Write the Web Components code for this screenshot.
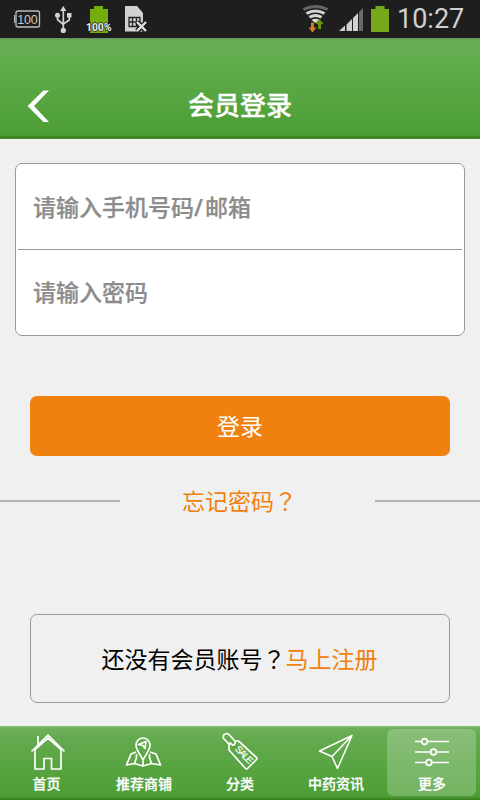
<!DOCTYPE html>
<html lang="zh-CN">
<head>
<meta charset="utf-8">
<title>会员登录</title>
<style>
html,body{margin:0;height:100%}
body{background:#f0f0f0;font-family:"Noto Sans CJK SC",sans-serif;overflow:hidden}
</style>
</head>
<body>
<login-app></login-app>
<script>
const define = (name, html) => customElements.define(name, class extends HTMLElement {
  constructor() {
    super();
    const t = document.createElement('template');
    t.innerHTML = html;
    this.attachShadow({mode: 'open'}).append(t.content.cloneNode(true));
  }
});

define('status-bar', `
<style>
:host{display:flex;height:38px;background:#1e1e1e;justify-content:space-between;align-items:flex-start;color:#d0d0d0}
svg{display:block;flex:none}
.right{display:flex}
.time{font:27px/38px Roboto,sans-serif;width:83px;white-space:nowrap}
</style>
<svg width="160" height="38" viewBox="0 0 160 38">
  <rect x="16" y="11" width="23.5" height="16" rx="2" fill="none" stroke="#bdbdbd" stroke-width="1.3"/>
  <path d="M14.5 15v8" stroke="#bdbdbd"/>
  <text x="17.3" y="24" font-family="Liberation Sans,sans-serif" font-size="12.5" fill="#c4c4c4" textLength="20.5">100</text>
  <g stroke="#cfcfcf" stroke-width="1.7" fill="none"><path d="M63.3 9v21M57.5 16v3.5l5.800 5M69.300 15v5l-6 4"/></g>
  <g fill="#d4d4d4"><path d="M63.300 6l3.200 5h-6.400zM67 13h4.500v4.500H67z"/><circle cx="57.500" cy="15.300" r="2.500"/><circle cx="63.300" cy="30.400" r="2.600"/></g>
  <path d="M94 6h9v3h5v24H90V9h4z" fill="#75ad0b"/>
  <text x="86" y="30.700" font-family="Roboto,sans-serif" font-weight="700" font-size="10.500" fill="#eee" stroke="#222" stroke-width="1.4" paint-order="stroke" textLength="25.500">100%</text>
  <path d="M125 6h12l6 7v18.500h-18z" fill="#d1d1d1"/>
  <path d="M129 17.500h11v9h-11zM132.500 17v10M136.500 17v10M129 22h11" fill="none" stroke="#262626" stroke-width="1.300"/>
  <path d="M137 22l9 9M146 22l-9 9" stroke="#1e1e1e" stroke-width="5"/>
  <path d="M137 22l9 9M146 22l-9 9" stroke="#e0e0e0" stroke-width="2.400"/>
</svg>
<div class="right">
<svg width="97" height="38" viewBox="300 0 97 38">
  <g fill="none" stroke-width="3"><path d="M303.500 9.500q12-6 24 0" stroke="#666"/><path d="M306.500 13.500q9-5 18 0M309.500 17.300q6-3.800 12 0" stroke="#d5d5d5"/></g>
  <path d="M311.500 20q4-2.500 8 0l-4 3z" fill="#ddd"/>
  <path d="M311 22.500h3v5h2.500l-4 5-4-5h2.500z" fill="#d97b24"/>
  <path d="M318 29h3v-5h2.500l-4-5-4 5h2.500z" fill="#66980f"/>
  <path d="M339 31l6-5.500V31zM346.500 24.500l5.500-5.500v12h-5.500zM353 18l5-5v18h-5z" fill="#d1d1d1"/><path d="M359 12l4-4v23h-4z" fill="#696969"/>
  <path d="M375.500 6h9v3h4.500v23h-18V9h4.500z" fill="#75a81b"/>
</svg><div class="time">10:27</div></div>`);

define('title-bar', `
<style>
:host{display:grid;grid-template-columns:78px 1fr 78px;height:101px;box-sizing:border-box;padding-top:33px;align-items:center;
background:linear-gradient(#698b5f 0,#68ae54 2px,#64ae51 12px,#4c9e34 97px,#388020 99px,#388020 100px,#4f8d3c 101px);color:#fff}
svg{display:block;margin:1px 0 0 27px}
h1{margin:0;font-size:26px;line-height:66px;padding-bottom:2px;font-weight:500;-webkit-text-stroke:.3px #fff;text-align:center}
</style>
<svg width="23" height="34" viewBox="0 0 23 34"><path d="M16.500 1.500H22L7 17l15 16h-5.500L.5 17z" fill="#fff"/></svg>
<h1><slot></slot></h1>`);

define('field-row', `
<style>
:host{display:flex;height:85px;align-items:center;padding-left:15px;margin:0 2px;color:#8c8c8c;font-size:23px;font-weight:500;-webkit-text-stroke:.25px #8c8c8c;border-bottom:1px solid #999}
:host(:last-of-type){border:0;height:83px}
span{line-height:34px;padding-bottom:1px}
</style><span><slot></slot></span>`);

define('wide-slash', `<style>:host{display:inline-block;width:11px;font-family:"Open Sans",sans-serif;font-weight:600;line-height:1}</style><slot></slot>`);

define('field-group', `
<style>
:host{display:block;box-sizing:border-box;margin:24px 15px 0;height:173px;border:1px solid #999;border-radius:7px;background:#fff}
</style><slot></slot>`);

define('primary-button', `
<style>
:host{display:flex;margin:60px 30px 0;height:60px;box-sizing:border-box;padding-bottom:3px;border-radius:7px;background:#f08010;color:#fff;font-size:23px;align-items:center;justify-content:center}
</style><span><slot></slot></span>`);

define('ruled-link', `
<style>
:host{display:grid;grid-template-columns:120px 1fr 105px;align-items:center;height:40px;margin-top:25px;color:#f08010;font:23px/34px "Noto Sans CJK SC",sans-serif}
i{height:2px;background:#b3b3b3}
span{text-align:left;padding:0 0 2px 62px}
</style><i></i><span><slot></slot></span><i></i>`);

define('register-box', `
<style>
:host{display:flex;box-sizing:border-box;margin:93px 30px 0;height:89px;border:1px solid #999;border-radius:7px;align-items:center;justify-content:center;font-size:23px;line-height:34px;color:#000;padding:0 1px 2px 0}
.link{color:#f08010}
</style><span><slot></slot></span><span class="link"><slot name="action"></slot></span>`);

define('full-mark', `<style>:host{font-family:"Noto Sans CJK TC",sans-serif}</style><span lang="zh-TW"><slot></slot></span>`);

define('nav-item', `
<style>
:host{display:flex;flex-direction:column;align-items:center;box-sizing:border-box;height:74px;padding-top:5px;color:#fff;width:96px}
:host(:first-of-type){padding-right:3px}
:host([active]){padding:0 4px 0 3px}
.box{display:flex;flex-direction:column;align-items:center;width:100%}
:host([active]) .box{margin-top:3px;height:67px;padding-top:2px;box-sizing:border-box;border-radius:6px;background:rgba(255,255,255,.22)}
b{font-size:14px;line-height:20px;margin-top:2px;font-weight:500;-webkit-text-stroke:.25px #fff;white-space:nowrap}
:host([active]) b{padding-left:1px}
::slotted(svg){display:block;width:40px;height:40px;fill:none;stroke:#fff;stroke-width:1.700;stroke-linejoin:round}
</style><div class="box"><slot name="icon"></slot><b><slot></slot></b></div>`);

define('nav-bar', `
<style>
:host{display:grid;grid-template-columns:repeat(5,96px);height:74px;background:linear-gradient(#82bd72 0,#82bd72 1px,#6db15b 2px,#65ab50 10px,#4c9e34 71px,#388020 73px,#388020 74px)}
</style><slot></slot>`);

define('login-app', `
<style>
:host{display:flex;flex-direction:column;width:480px;height:800px;background:#f0f0f0}
main{flex:1;min-height:0}
</style>
<status-bar></status-bar>
<title-bar>会员登录</title-bar>
<main>
<field-group><field-row>请输入手机号码<wide-slash>/</wide-slash>邮箱</field-row><field-row>请输入密码</field-row></field-group>
<primary-button>登录</primary-button>
<ruled-link>忘记密码<full-mark lang="zh-TW">？</full-mark></ruled-link>
<register-box>还没有会员账号<full-mark lang="zh-TW">？</full-mark><span slot="action">马上注册</span></register-box>
</main>
<nav-bar>
<nav-item><svg slot="icon" viewBox="0 0 40 40"><path d="M4.500 20.500L21 4 37.500 20.500M11 13.500V5M8 18.500V38h9V27.500h7.500V38H34V18.500L21 7z"/></svg>首页</nav-item>
<nav-item><svg slot="icon" viewBox="0 0 40 40"><path d="M19 29C16 23 12 19 12 14a7 7 0 0 1 14 0c0 5-4 9-7 15z"/><path d="M14.500 13.500l7.500-3-1 7-2-3z"/><path d="M12 21l-5 2-4.500 11 8-1.500L19 35l8.500-2.500 9 1.500-4.500-11-6-2M12.500 23v3.500l-2 6M25.500 23v3.500l2 6M19 30v5"/></svg>推荐商铺</nav-item>
<nav-item><svg slot="icon" viewBox="0 0 40 40"><path d="M11 12Q9 14 7 11L3.500 7.500c-1.500-4 3-6.500 6-3.500l5.500 6c1 3-1 5-3 3.500l-2.500-2"/><path d="M9 12l0 7 16.500 18.500q1 1 2 0l9-9q1-1 0-2L18.500 10H15"/><text transform="translate(14.500 18.500) rotate(46)" font-family="Liberation Sans,sans-serif" font-size="9.500" fill="#fff" style="stroke-width:.2" textLength="21">SALE</text></svg>分类</nav-item>
<nav-item><svg slot="icon" viewBox="0 0 40 40"><path d="M36 4.500L3.500 20 16 25.500 21.500 37.500zM36 4.500l-20 21" style="stroke-width:1.500"/></svg>中药资讯</nav-item>
<nav-item active><svg slot="icon" viewBox="0 0 40 40"><path d="M3 10.500h6.500M15.500 10.500H37M3 21h15.500M24.500 21H37M3 31.500h11M20 31.500H37"/><circle cx="12.500" cy="10.500" r="2.800"/><circle cx="21.500" cy="21" r="2.800"/><circle cx="17" cy="31.500" r="2.800"/></svg>更多</nav-item>
</nav-bar>`);
</script>
</body>
</html>
